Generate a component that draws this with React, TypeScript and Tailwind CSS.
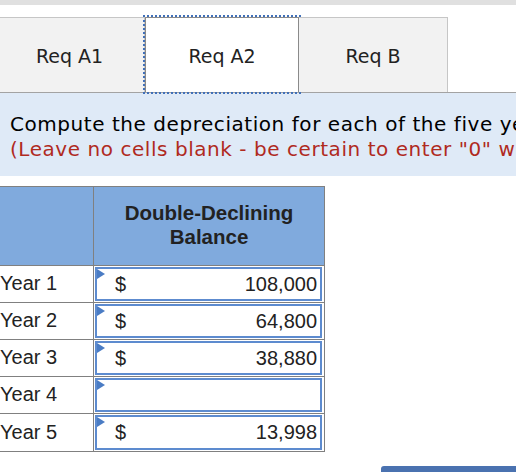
import React from "react";

const rows = [
  { label: "Year 1", value: "108,000" },
  { label: "Year 2", value: "64,800" },
  { label: "Year 3", value: "38,880" },
  { label: "Year 4", value: "" },
  { label: "Year 5", value: "13,998" },
];

const Flag = () => (
  <svg className="absolute left-0 top-0" width="8" height="10" viewBox="0 0 8 10">
    <polygon points="0,0 8,5 0,10" fill="#4a7cc4" />
  </svg>
);

const App: React.FC = () => {
  return (
    <div className="relative w-[516px] h-[472px] overflow-hidden bg-white text-[#222]">
      <div className="h-[5px] bg-[#e0e0e0]" />

      {/* Tabs */}
      <div className="mt-[12px] flex border-b border-[#a3a3a3] font-['DejaVu_Sans',sans-serif] text-[19px]">
        <div className="ml-[-5px] w-[150px] h-[75px] flex items-center justify-center bg-[#f2f2f2] border-t border-r border-[#c6c6c6] pt-[2px]">
          Req A1
        </div>
        <div className="w-[154px] h-[75px] flex items-center justify-center bg-white border-t border-x border-[#8a8a8a] outline-2 outline-dotted outline-[#4170b8] pt-[2px]">
          Req A2
        </div>
        <div className="w-[149px] h-[75px] flex items-center justify-center bg-[#f2f2f2] border-t border-r border-[#c6c6c6] pt-[2px]">
          Req B
        </div>
      </div>

      {/* Instructions */}
      <div className="bg-[#dfeaf7] h-[83px] pl-[10px] pt-[19px] font-['DejaVu_Sans',sans-serif] text-[20px] leading-[25px] tracking-[0.55px] whitespace-nowrap overflow-hidden">
        <p className="text-black">Compute the depreciation for each of the five years of the asset's life.</p>
        <p className="text-[#b02a1f]">(Leave no cells blank - be certain to enter "0" wherever required.)</p>
      </div>

      {/* Table */}
      <div className="mt-[10px] ml-[-2px] w-[327px] border border-[#808080] font-['Liberation_Sans',Arial,sans-serif] text-[20px]">
        <div className="flex h-[79px] bg-[#80aadd] border-b border-[#808080]">
          <div className="w-[95px] border-r border-[#808080]" />
          <div className="flex-1 flex items-center justify-center text-center font-bold text-[20.5px] leading-[24px] text-[#222] pb-[2px]">
            Double-Declining
            <br />
            Balance
          </div>
        </div>
        {rows.map((r, i) => (
          <div
            key={r.label}
            className={`flex h-[37px] ${i < rows.length - 1 ? "border-b border-[#808080]" : ""}`}
          >
            <div className="w-[95px] border-r border-[#808080] pl-[1px] pb-[2px] flex items-center">
              {r.label}
            </div>
            <div className="flex-1 pl-[1px] pr-[2px] pt-[1px] pb-[1px]">
              <div className="relative h-full border-2 border-[#5d8bcf] flex items-center justify-between pl-[18px] pr-[3px] pb-[1px]">
                <Flag />
                {r.value && (
                  <>
                    <span>$</span>
                    <span>{r.value}</span>
                  </>
                )}
              </div>
            </div>
          </div>
        ))}
      </div>

      <div className="absolute left-[381px] top-[466px] w-[140px] h-[10px] bg-[#4a72b0] rounded-tl-[3px]" />
    </div>
  );
};

export default App;
